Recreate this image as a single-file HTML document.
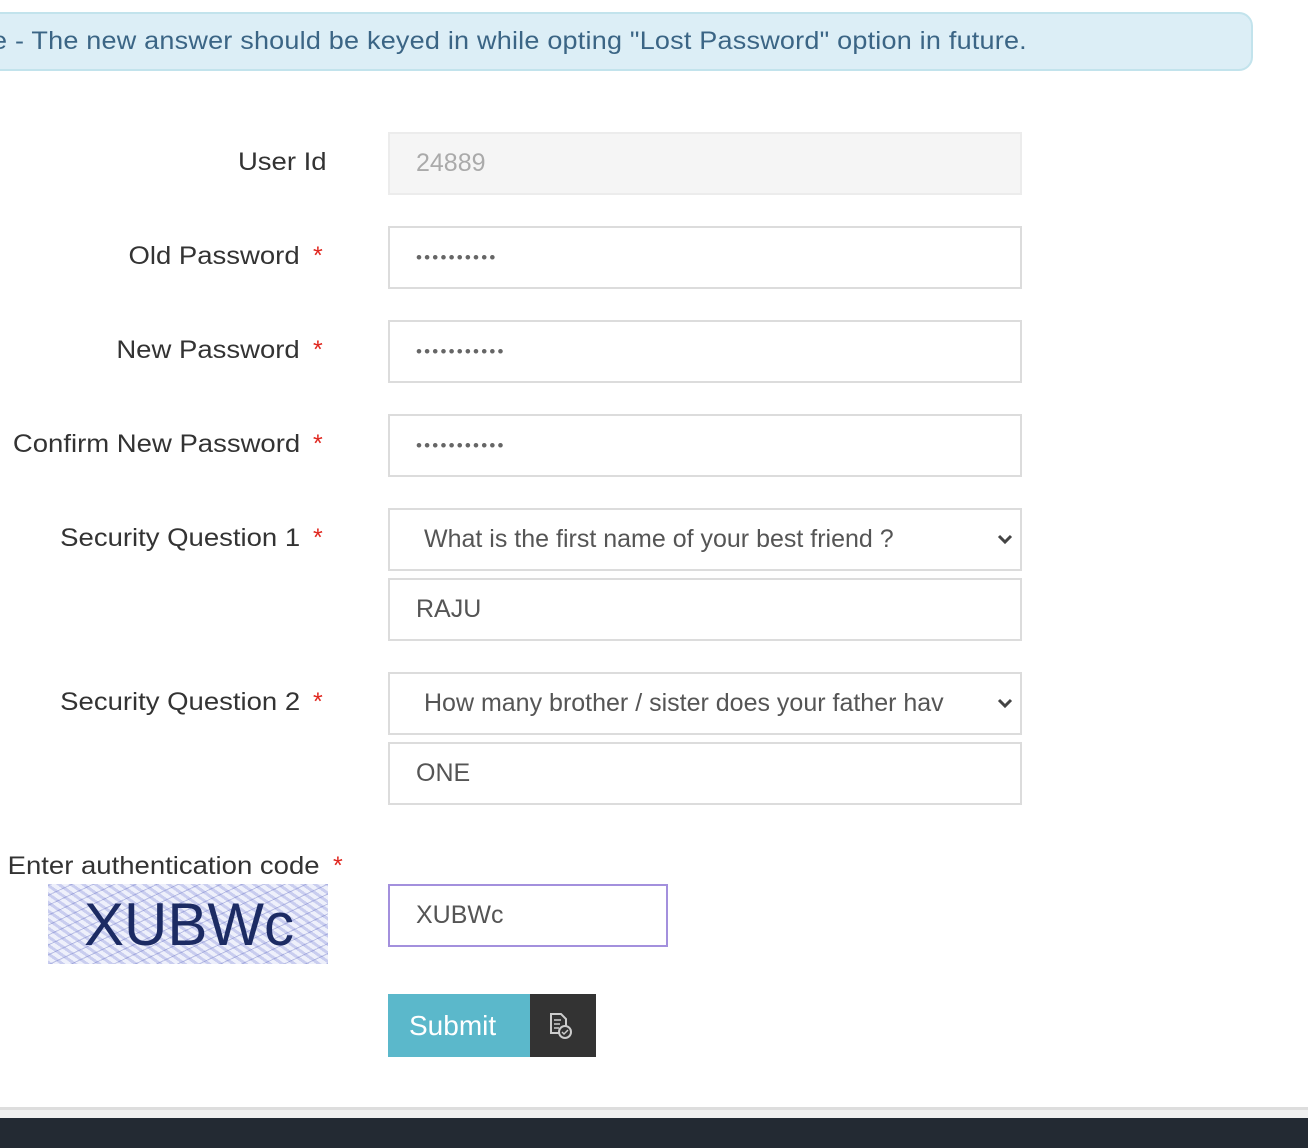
<!DOCTYPE html>
<html><head><meta charset="utf-8"><style>
*{box-sizing:border-box;margin:0;padding:0}
body{width:1308px;height:1148px;position:relative;overflow:hidden;background:#fff;font-family:"Liberation Sans",sans-serif;}
.a{position:absolute}
.alert{left:-20px;top:12px;width:1273px;height:59px;background:#dceef6;border:2px solid #c2e3ec;border-radius:14px;overflow:hidden}
.alert span{position:absolute;left:10px;top:0;color:#3b6585;font-size:25px;line-height:55px;white-space:nowrap;transform:scaleX(1.08);transform-origin:left;letter-spacing:0.2px}
.lbl{position:absolute;right:1008px;font-size:25px;color:#333;white-space:nowrap;transform:scaleX(1.1);transform-origin:right}
.st{position:absolute;left:313px;color:#e0271f;font-size:25px}
.in{position:absolute;left:388px;width:634px;height:63px;border:2px solid #dcdcdc;background:#fff;font-size:25px;color:#555;line-height:59px;padding-left:26px;white-space:nowrap}
.sel{padding-left:34px}
.chev{position:absolute;right:6px;top:22px}
.dots{font-size:17px;color:#666;letter-spacing:2.2px}
</style></head><body>
<div class="a alert"><span>e - The new answer should be keyed in while opting "Lost Password" option in future.</span></div>

<div class="lbl" style="top:148px;right:981px">User Id</div>
<div class="lbl" style="top:242px">Old Password</div><div class="st" style="top:242px">*</div>
<div class="lbl" style="top:336px">New Password</div><div class="st" style="top:336px">*</div>
<div class="lbl" style="top:430px">Confirm New Password</div><div class="st" style="top:430px">*</div>
<div class="lbl" style="top:524px">Security Question 1</div><div class="st" style="top:524px">*</div>
<div class="lbl" style="top:688px">Security Question 2</div><div class="st" style="top:688px">*</div>
<div class="lbl" style="top:852px;right:988px">Enter authentication code</div><div class="st" style="top:852px;left:333px">*</div>

<div class="in" style="top:132px;background:#f5f5f5;border-color:#ececec;color:#aaa">24889</div>
<div class="in dots" style="top:226px">••••••••••</div>
<div class="in dots" style="top:320px">•••••••••••</div>
<div class="in dots" style="top:414px">•••••••••••</div>
<div class="in sel" style="top:508px">What is the first name of your best friend ?<svg class="chev" width="18" height="14" viewBox="0 0 18 14"><path d="M3 4l6 6 6-6" stroke="#444" stroke-width="3" fill="none"/></svg></div>
<div class="in" style="top:578px">RAJU</div>
<div class="in sel" style="top:672px">How many brother / sister does your father hav<svg class="chev" width="18" height="14" viewBox="0 0 18 14"><path d="M3 4l6 6 6-6" stroke="#444" stroke-width="3" fill="none"/></svg></div>
<div class="in" style="top:742px">ONE</div>

<div class="a" style="left:48px;top:884px;width:280px;height:80px;background:repeating-linear-gradient(35deg,#c9cdef 0 3px,#eef0fb 3px 7px),#dfe2f5;overflow:hidden">
<div style="position:absolute;inset:0;background:repeating-linear-gradient(-25deg,rgba(90,100,190,.35) 0 1px,transparent 1px 9px)"></div>
<div style="position:absolute;left:36px;top:6px;font-size:60px;color:#1c2b63;letter-spacing:0px;line-height:70px">XUBWc</div></div>
<div class="in" style="top:884px;width:280px;border-color:#a390dd;color:#555">XUBWc</div>

<div class="a" style="left:388px;top:994px;width:142px;height:63px;background:#5bb8cb;color:#fff;font-size:28px;line-height:63px;padding-left:21px">Submit</div>
<div class="a" style="left:530px;top:994px;width:66px;height:63px;background:#333">
<svg width="66" height="63" viewBox="0 0 66 63"><path d="M21 20h10l5 5v14H21z" fill="none" stroke="#ccc" stroke-width="2"/><path d="M24 26h7M24 30h6M24 34h5" stroke="#ccc" stroke-width="1.5"/><circle cx="35" cy="38" r="6" fill="#333" stroke="#ccc" stroke-width="2"/><path d="M32 38l2 2 4-4" stroke="#ccc" stroke-width="1.5" fill="none"/></svg></div>

<div class="a" style="left:0;top:1107px;width:1308px;height:3px;background:#ddd"></div>
<div class="a" style="left:0;top:1110px;width:1308px;height:8px;background:#f0f0f0"></div>
<div class="a" style="left:0;top:1118px;width:1308px;height:30px;background:#232a33"></div>
</body></html>
